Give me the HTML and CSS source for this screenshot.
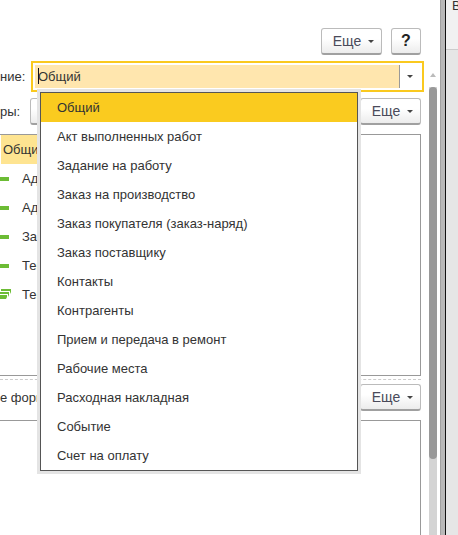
FILE: index.html
```
<!DOCTYPE html>
<html lang="ru">
<head>
<meta charset="utf-8">
<title>Общий</title>
<link rel="stylesheet" href="styles.css">
</head>
<body>
<div class="window">
  <main class="form">
    <div class="toolbar">
      <button class="btn" type="button">Еще<span class="caret"></span></button>
      <button class="btn btn-help" type="button">?</button>
    </div>

    <div class="field-row">
      <label class="label" for="purpose">ние:</label>
      <div class="combo">
        <input class="combo-input" id="purpose" type="text" value="Общий">
        <button class="combo-toggle" type="button" aria-label="Открыть список"><span class="caret"></span></button>
        <span class="cursor"></span>
        <ul class="menu" role="listbox">
          <li class="option selected" role="option" aria-selected="true">Общий</li>
          <li class="option" role="option">Акт выполненных работ</li>
          <li class="option" role="option">Задание на работу</li>
          <li class="option" role="option">Заказ на производство</li>
          <li class="option" role="option">Заказ покупателя (заказ-наряд)</li>
          <li class="option" role="option">Заказ поставщику</li>
          <li class="option" role="option">Контакты</li>
          <li class="option" role="option">Контрагенты</li>
          <li class="option" role="option">Прием и передача в ремонт</li>
          <li class="option" role="option">Рабочие места</li>
          <li class="option" role="option">Расходная накладная</li>
          <li class="option" role="option">Событие</li>
          <li class="option" role="option">Счет на оплату</li>
        </ul>
      </div>
    </div>

    <div class="command-row">
      <span class="label">ры:</span>
      <button class="btn btn-blank" type="button" aria-label="Добавить"></button>
      <button class="btn push" type="button">Еще<span class="caret"></span></button>
    </div>

    <ul class="tree">
      <li class="node root">Общий</li>
      <li class="node"><span class="dash"></span>Ад</li>
      <li class="node"><span class="dash"></span>Ад</li>
      <li class="node"><span class="dash"></span>За</li>
      <li class="node"><span class="dash"></span>Тек</li>
      <li class="node">
        <svg class="stack" viewBox="0 0 12 11" aria-hidden="true">
          <path d="M0 6H7V8L6 10H0ZM0 3H9V6L8 8V5H0ZM1 0H11V3L10 5V2H1Z" fill="#6cbc35"/>
        </svg>Тек</li>
    </ul>

    <hr class="divider">

    <div class="command-row">
      <span class="label">е форм</span>
      <button class="btn push" type="button">Еще<span class="caret"></span></button>
    </div>

    <div class="panel"></div>
  </main>

  <div class="scrollbar">
    <span class="scroll-up"></span>
    <div class="track"><div class="thumb"></div></div>
  </div>
  <div class="splitter"></div>
  <aside class="side">
    <div class="side-head">В</div>
  </aside>
</div>
</body>
</html>
```
FILE: styles.css
```
* { box-sizing: border-box; }

body {
  margin: 0;
  background: #fff;
  color: #333;
  font: 13px/16px "Liberation Sans", Arial, sans-serif;
}

ul { margin: 0; padding: 0; list-style: none; }
button, input { font: inherit; color: inherit; }

.window {
  display: flex;
  height: 100vh;
  overflow: hidden;
}

.form {
  flex: 1;
  min-width: 0;
  display: flex;
  flex-direction: column;
  padding-top: 28px;
}

.toolbar {
  display: flex;
  justify-content: flex-end;
  gap: 9px;
  padding-right: 3px;
}

.btn {
  display: flex;
  align-items: center;
  justify-content: center;
  gap: 7px;
  width: 61px;
  height: 27px;
  padding: 0 0 0 4px;
  border: 1px solid #bbb;
  border-bottom: 2px solid #a0a0a0;
  border-radius: 3px;
  background: linear-gradient(#fff 40%, #ececec);
  color: #4a4a5a;
  font-size: 14px;
}

.btn-help {
  width: 30px;
  padding: 0;
  color: #222;
  font-size: 16px;
  font-weight: bold;
}

.caret {
  border: 3px solid transparent;
  border-top-color: #444;
  border-bottom: 0;
}

.label {
  flex: none;
  white-space: nowrap;
}

.field-row {
  display: flex;
  align-items: center;
  margin-top: 6px;
}

.field-row .label,
.command-row .label { width: 30px; }

.combo {
  position: relative;
  flex: 1;
  display: flex;
  height: 31px;
  margin-left: 1px;
  padding: 2px;
  border: 2px solid #fac91f;
}

.combo-input {
  flex: 1;
  min-width: 0;
  padding: 0 3px;
  border: 0;
  border-right: 1px solid #999;
  outline: 0;
  background: #ffe6ae;
}

.combo-toggle {
  display: flex;
  align-items: center;
  justify-content: center;
  width: 20px;
  padding: 0;
  border: 0;
  background: #fff;
}

.cursor {
  position: absolute;
  left: 5px;
  top: 5px;
  width: 1px;
  height: 16px;
  background: #112;
}

.menu {
  position: absolute;
  z-index: 1;
  top: 29px;
  left: 7px;
  right: 64px;
  border: 1px solid #555;
  background: #fff;
  box-shadow: 0 0 0 3px #e4e4e4;
}

.option {
  height: 29px;
  padding-left: 16px;
  line-height: 29px;
  white-space: nowrap;
}

.selected { background: #facb1f; }

.command-row {
  display: flex;
  align-items: center;
  margin-top: 6px;
  padding-right: 3px;
}

.push { margin-left: auto; }

.tree {
  height: 242px;
  margin: 9px 3px 0 0;
  border: 1px solid #999;
  border-left: 0;
}

.node {
  display: flex;
  align-items: center;
  height: 29px;
}

.root {
  width: 50%;
  margin-left: 1px;
  padding-left: 2px;
  background: #fee491;
}

.dash {
  width: 9px;
  height: 4px;
  margin-right: 13px;
  background: #6cbc35;
}

.stack {
  width: 12px;
  height: 11px;
  margin-right: 10px;
}

.divider {
  align-self: stretch;
  margin: 3px 3px 0 0;
  border: 0;
  border-top: 1px dashed #ccc;
}

.divider + .command-row { margin-top: 4px; }

.panel {
  flex: 1;
  margin: 9px 3px 0 0;
  border: 1px solid #999;
  border-width: 1px 1px 0 0;
}

.scrollbar {
  flex: none;
  display: flex;
  flex-direction: column;
  align-items: center;
  width: 8px;
  margin: 73px 3px 0 5px;
}

.scroll-up {
  border: 3px solid transparent;
  border-bottom: 4px solid #bbb;
  border-top: 0;
}

.track {
  flex: 1;
  width: 8px;
  margin-top: 10px;
  background: #d4d4d4;
}

.thumb {
  height: 83%;
  border-radius: 4px;
  background: #999;
}

.splitter {
  flex: none;
  width: 6px;
  border: 1px solid #a0a0a0;
  border-width: 0 1px;
  border-right-color: #111;
  background: #b8b8b8;
}

.side {
  flex: none;
  width: 12px;
  background: #e6e6e6;
}

.side-head {
  height: 50px;
  padding-left: 6px;
  border-bottom: 1px solid #ccc;
  background: #f1f1f1;
  line-height: 12px;
}
```
